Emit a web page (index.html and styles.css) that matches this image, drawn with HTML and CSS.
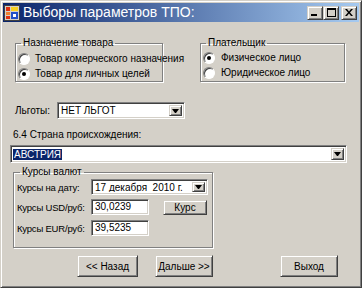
FILE: index.html
```html
<!DOCTYPE html>
<html>
    <head>
        <title>Выборы параметров ТПО</title>
        <link rel="stylesheet" href="styles.css">
    </head>
    <body>
        <div class="window">
            <div class="titlebar">
                <svg class="app-icon" width="16" height="16" viewBox="0 0 16 16">
                    <rect x="0.5" y="0.5" width="15" height="15" fill="#d4d0c8" stroke="#404040"/>
                    <rect x="2" y="2" width="4" height="4" fill="#e03010"/>
                    <rect x="7" y="2" width="7" height="4" fill="#f8d020"/>
                    <rect x="2" y="7" width="4" height="3" fill="#f08030"/>
                    <rect x="2" y="11" width="4" height="3" fill="#e03010"/>
                    <rect x="7" y="7" width="7" height="7" fill="#2050c8"/>
                    <rect x="9" y="9" width="3" height="3" fill="#ffffff"/>
                </svg>
                <span class="title">Выборы параметров ТПО:</span>
                <div class="caption-buttons">
                    <span class="cap-btn raised">
                        <svg width="8" height="7" viewBox="0 0 8 7"><rect x="0" y="5" width="6" height="2" fill="#000"/></svg>
                    </span>
                    <span class="cap-btn raised">
                        <svg width="9" height="9" viewBox="0 0 9 9"><rect x="0.5" y="0.5" width="8" height="8" fill="none" stroke="#000"/><rect x="0" y="1" width="9" height="1" fill="#000"/></svg>
                    </span>
                    <span class="cap-btn cap-close raised">
                        <svg width="8" height="7" viewBox="0 0 8 7"><path d="M0 0h2l2 2.5l2-2.5h2l-3 3.5l3 3.5h-2l-2-2.5l-2 2.5h-2l3-3.5z" fill="#000"/></svg>
                    </span>
                </div>
            </div>

            <div class="client">
                <!-- Назначение товара / Плательщик -->
                <div class="groups">
                    <fieldset class="group group-goods">
                        <legend>Назначение товара</legend>
                        <label class="radio-row"><span class="radio"></span>Товар комерческого назначения</label>
                        <label class="radio-row"><span class="radio checked"></span>Товар для личных целей</label>
                    </fieldset>
                    <fieldset class="group group-payer">
                        <legend>Плательщик</legend>
                        <label class="radio-row"><span class="radio checked"></span>Физическое лицо</label>
                        <label class="radio-row"><span class="radio"></span>Юридическое лицо</label>
                    </fieldset>
                </div>

                <div class="benefits-row">
                    <span class="benefits-label">Льготы:</span>
                    <div class="combo sunken combo-benefits">
                        <span class="combo-text">НЕТ ЛЬГОТ</span>
                        <span class="combo-arrow raised"></span>
                    </div>
                </div>

                <div class="country-label">6.4 Страна происхождения:</div>
                <div class="combo sunken combo-country">
                    <span class="combo-text"><span class="selected">АВСТРИЯ</span></span>
                    <span class="combo-arrow raised"></span>
                </div>

                <!-- Курсы валют -->
                <fieldset class="group group-rates">
                    <legend>Курсы валют</legend>
                    <div class="rate-row rate-date">
                        <span class="rate-label">Курсы на дату:</span>
                        <div class="combo sunken combo-date">
                            <span class="combo-text">17 декабря  2010 г.</span>
                            <span class="combo-arrow raised"></span>
                        </div>
                    </div>
                    <div class="rate-row rate-usd">
                        <span class="rate-label">Курсы USD/руб:</span>
                        <div class="textbox sunken">30,0239</div>
                        <div class="button raised btn-rate">Курс</div>
                    </div>
                    <div class="rate-row rate-eur">
                        <span class="rate-label">Курсы EUR/руб:</span>
                        <div class="textbox sunken">39,5235</div>
                    </div>
                </fieldset>

                <div class="nav-row">
                    <div class="button raised btn-back">&lt;&lt; Назад</div>
                    <div class="button raised btn-next">Дальше &gt;&gt;</div>
                    <div class="button raised btn-exit">Выход</div>
                </div>
            </div>
        </div>
    </body>
</html>
```
FILE: styles.css
```css
body {
    margin: 0;
    font-family: "Liberation Sans", Arial, sans-serif;
    font-size: 10px;
    color: #000;
}

/* Classic 3D borders */
.raised {
    background-color: #d4d0c8;
    border: 1px solid;
    border-color: #d4d0c8 #404040 #404040 #d4d0c8;
    box-shadow: inset 1px 1px 0 #fff, inset -1px -1px 0 #808080;
    box-sizing: border-box;
}

.sunken {
    background-color: #fff;
    border: 1px solid;
    border-color: #808080 #fff #fff #808080;
    box-shadow: inset 1px 1px 0 #404040, inset -1px -1px 0 #d4d0c8;
    box-sizing: border-box;
}

/* Window frame */
.window {
    width: 362px;
    height: 288px;
    box-sizing: border-box;
    background-color: #d4d0c8;
    border: 1px solid;
    border-color: #d4d0c8 #404040 #404040 #d4d0c8;
    box-shadow: inset 1px 1px 0 #fff, inset -1px -1px 0 #808080;
    padding: 2px;
    display: flex;
    flex-direction: column;
}

.titlebar {
    height: 19px;
    flex: none;
    display: flex;
    align-items: center;
    padding: 0 2px 0 1px;
    background: linear-gradient(to right, #0a246a, #a6caf0);
    color: #fff;
}

.app-icon {
    flex: none;
}

.title {
    margin-left: 3px;
    font-size: 14px;
    line-height: 19px;
    white-space: nowrap;
}

.caption-buttons {
    margin-left: auto;
    display: flex;
}

.cap-btn {
    width: 16px;
    height: 14px;
    display: flex;
    align-items: center;
    justify-content: center;
}

.cap-close {
    margin-left: 2px;
}

/* Client area */
.client {
    display: flex;
    flex-direction: column;
    align-items: flex-start;
}

.groups {
    display: flex;
    margin-top: 15px;
}

.group {
    margin: 0;
    padding: 0 0 0 2px;
    border: 1px solid #808080;
    box-shadow: inset 1px 1px 0 #fff, 1px 1px 0 #fff;
    min-width: 0;
}

.group legend {
    padding: 0 2px;
    margin-left: 3px;
    line-height: 12px;
}

.group-goods {
    margin-left: 12px;
    width: 148px;
    height: 45px;
    box-sizing: border-box;
    padding-top: 2px;
}

.group-payer {
    margin-left: 37px;
    width: 145px;
    height: 45px;
    box-sizing: border-box;
    padding-top: 1px;
}

.radio-row {
    display: flex;
    align-items: center;
    height: 15px;
    white-space: nowrap;
}

.radio {
    position: relative;
    width: 12px;
    height: 12px;
    box-sizing: border-box;
    border-radius: 50%;
    border: 1px solid;
    border-color: #808080 #fff #fff #808080;
    box-shadow: inset 1px 1px 0 #404040;
    background-color: #fff;
    margin-right: 5px;
    flex: none;
}

.group-payer .radio {
    margin-right: 6px;
}

.radio.checked::after {
    content: "";
    position: absolute;
    left: 3px;
    top: 3px;
    width: 4px;
    height: 4px;
    border-radius: 50%;
    background-color: #000;
}

/* Combo boxes */
.combo {
    display: flex;
    align-items: stretch;
    padding: 2px;
}

.combo-text {
    flex: 1;
    display: flex;
    align-items: center;
    padding-left: 1px;
    white-space: pre;
    overflow: hidden;
}

.combo-arrow {
    width: 13px;
    flex: none;
    display: flex;
    align-items: center;
    justify-content: center;
}

.combo-arrow::after {
    content: "";
    width: 1px;
    height: 0;
    border-left: 3px solid transparent;
    border-right: 3px solid transparent;
    border-top: 4px solid #000;
}

.benefits-row {
    display: flex;
    align-items: center;
    margin-top: 20px;
}

.benefits-label {
    margin-left: 12px;
    width: 42px;
}

.combo-benefits {
    width: 128px;
    height: 17px;
}

.country-label {
    margin: 10px 0 0 10px;
    line-height: 12px;
}

.combo-country {
    margin: 4px 0 0 7px;
    width: 337px;
    height: 18px;
}

.combo-country .combo-text {
    padding-left: 0;
}

.selected {
    background-color: #0a246a;
    color: #fff;
    padding: 0 1px;
}

/* Курсы валют */
.group-rates {
    margin: 3px 0 0 10px;
    width: 200px;
    box-sizing: border-box;
    padding: 0 0 11px 3px;
}

.rate-row {
    display: flex;
    align-items: center;
}

.rate-date {
    margin-top: 1px;
}

.rate-usd {
    margin-top: 4px;
}

.rate-eur {
    margin-top: 5px;
}

.rate-label {
    width: 74px;
    flex: none;
    white-space: nowrap;
    font-size: 9.5px;
    letter-spacing: -0.2px;
}

.combo-date {
    width: 117px;
    height: 16px;
}

.textbox {
    width: 58px;
    height: 16px;
    padding-left: 3px;
    line-height: 14px;
}

.button {
    display: flex;
    align-items: center;
    justify-content: center;
}

.btn-rate {
    margin-left: 14px;
    width: 44px;
    height: 15px;
}

.nav-row {
    display: flex;
    margin-top: 7px;
}

.nav-row .button {
    height: 22px;
}

.btn-back {
    margin-left: 74px;
    width: 61px;
}

.btn-next {
    margin-left: 17px;
    width: 58px;
}

.btn-exit {
    margin-left: 67px;
    width: 58px;
}
```
